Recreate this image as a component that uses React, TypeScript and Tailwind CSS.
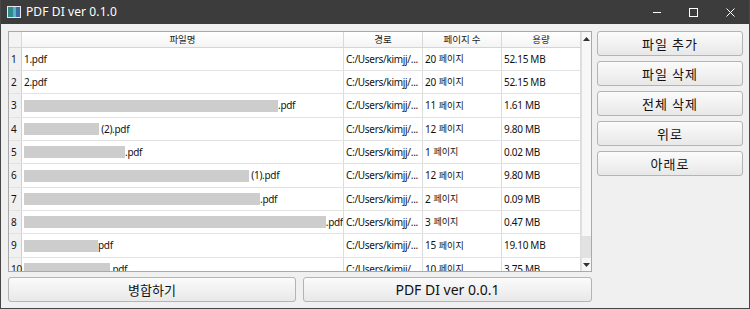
import React from 'react';

type Row = {
  block: string | null;
  name: string;
  pages: string;
  size: string;
};

const rows: Row[] = [
  { block: null, name: '1.pdf', pages: '20', size: '52.15 MB' },
  { block: null, name: '2.pdf', pages: '20', size: '52.15 MB' },
  { block: 'w-[254px]', name: '.pdf', pages: '11', size: '1.61 MB' },
  { block: 'w-[75px]', name: '\u00a0(2).pdf', pages: '12', size: '9.80 MB' },
  { block: 'w-[101px]', name: '.pdf', pages: '1', size: '0.02 MB' },
  { block: 'w-[225px]', name: '\u00a0(1).pdf', pages: '12', size: '9.80 MB' },
  { block: 'w-[236px]', name: '.pdf', pages: '2', size: '0.09 MB' },
  { block: 'w-[302px]', name: '.pdf', pages: '3', size: '0.47 MB' },
  { block: 'w-[74px]', name: 'pdf', pages: '15', size: '19.10 MB' },
  { block: 'w-[86px]', name: '.pdf', pages: '10', size: '3.75 MB' },
];

const cols = 'grid grid-cols-[13px_322px_79px_79px_79px]';
const latin = "font-['Noto_Sans','Noto_Sans_CJK_KR',sans-serif]";
const korean = "font-['Noto_Sans_CJK_KR','Noto_Sans',sans-serif]";

const Btn: React.FC<{ children: React.ReactNode; className?: string }> = ({ children, className }) => (
  <button
    className={`flex items-center justify-center rounded-[3px] border border-[#b4b4b4] bg-gradient-to-b from-[#fbfbfb] to-[#e8e8e8] text-[#111] ${className ?? ''}`}
  >
    {children}
  </button>
);

const App: React.FC = () => {
  return (
    <div className={`w-[750px] h-[309px] bg-[#f0f0f0] border-x border-b border-[#474747] flex flex-col ${latin}`}>
      {/* title bar */}
      <div className="h-[24px] bg-[#3c3c3c] flex items-center text-white shrink-0">
        <svg width="14" height="12" viewBox="0 0 14 12" className="ml-[6px] mr-[5px]">
          <rect x="0" y="0" width="14" height="12" fill="#e8e8e8" />
          <rect x="1" y="1" width="5" height="10" fill="#2e8b8b" />
          <rect x="6" y="1" width="3" height="10" fill="#5fb0c8" />
          <rect x="9" y="1" width="4" height="10" fill="#3a6ea8" />
        </svg>
        <span className="text-[12px] tracking-[0.1px]">PDF DI ver 0.1.0</span>
        <div className="ml-auto flex items-center h-full">
          <div className="w-[36px] h-full flex items-center justify-center">
            <div className="w-[8px] h-px bg-white" />
          </div>
          <div className="w-[36px] h-full flex items-center justify-center">
            <div className="w-[9px] h-[9px] border border-white" />
          </div>
          <div className="w-[38px] h-full flex items-center justify-center">
            <svg width="9" height="9" viewBox="0 0 9 9">
              <path d="M0.5 0.5L8.5 8.5M8.5 0.5L0.5 8.5" stroke="white" strokeWidth="1" />
            </svg>
          </div>
        </div>
      </div>

      <div className="flex pl-[7px] pt-[7px]">
        {/* left column */}
        <div className="w-[584px] flex flex-col">
          <div className="h-[241px] border border-[#a9a9a9] bg-white flex overflow-hidden">
            <div className="w-[572px] flex flex-col">
              <div className={`${cols} h-[16px] border-b border-[#d5d5d5] bg-gradient-to-b from-white to-[#f4f4f4] shrink-0`}>
                <div className="border-r border-[#d8d8d8] bg-[#f3f3f3]" />
                {['파일명', '경로', '페이지 수', '용량'].map((h) => (
                  <div
                    key={h}
                    className={`border-r border-[#d8d8d8] flex items-center justify-center text-[9.5px] text-[#222] leading-none ${korean}`}
                  >
                    {h}
                  </div>
                ))}
              </div>
              <div className="flex-1 overflow-hidden">
                {rows.map((r, i) => (
                  <div
                    key={i}
                    className={`${cols} ${i % 3 === 2 ? 'h-[24px]' : 'h-[23px]'} border-b border-[#e2e2e2] text-[10px] tracking-[-0.3px] text-[#111]`}
                  >
                    <div className="bg-[#f0f0f0] border-r border-[#d0d0d0] flex items-center pl-[2px]">{i + 1}</div>
                    <div className="border-r border-[#dcdcdc] flex items-center pl-[2px] whitespace-nowrap overflow-hidden">
                      {r.block && <span className={`${r.block} h-[12px] bg-[#cdcdcd] inline-block`} />}
                      <span>{r.name}</span>
                    </div>
                    <div className="border-r border-[#dcdcdc] flex items-center pl-[2px] whitespace-nowrap overflow-hidden">
                      C:/Users/kimjj/...
                    </div>
                    <div className="border-r border-[#dcdcdc] flex items-center pl-[2px] whitespace-nowrap">
                      <span>{r.pages}</span>
                      <span className={`ml-[3px] text-[9px] tracking-normal ${korean}`}>페이지</span>
                    </div>
                    <div className="border-r border-[#dcdcdc] flex items-center pl-[2px] whitespace-nowrap">{r.size}</div>
                  </div>
                ))}
              </div>
            </div>
            {/* scrollbar */}
            <div className="flex-1 flex flex-col bg-[#f7f7f7] border-l border-[#e0e0e0]">
              <div className="h-[14px] flex items-center justify-center">
                <svg width="7" height="4" viewBox="0 0 7 4">
                  <path d="M3.5 0L7 4H0Z" fill="#333" />
                </svg>
              </div>
              <div className="flex-1 flex flex-col justify-end">
                <div className="h-[22px] bg-[#e2e2e2]" />
              </div>
              <div className="h-[13px] flex items-center justify-center">
                <svg width="7" height="4" viewBox="0 0 7 4">
                  <path d="M0 0H7L3.5 4Z" fill="#333" />
                </svg>
              </div>
            </div>
          </div>
          <div className="flex gap-[7px] mt-[5px]">
            <Btn className={`w-[288px] h-[25px] text-[13px] ${korean}`}>병합하기</Btn>
            <Btn className="flex-1 h-[25px] text-[14px]">PDF DI ver 0.0.1</Btn>
          </div>
        </div>

        {/* right column */}
        <div className="w-[146px] ml-[5px] flex flex-col gap-[5px]">
          {['파일 추가', '파일 삭제', '전체 삭제', '위로', '아래로'].map((t) => (
            <Btn key={t} className={`h-[25px] text-[13px] tracking-[1px] ${korean}`}>
              {t}
            </Btn>
          ))}
        </div>
      </div>
    </div>
  );
};

export default App;
